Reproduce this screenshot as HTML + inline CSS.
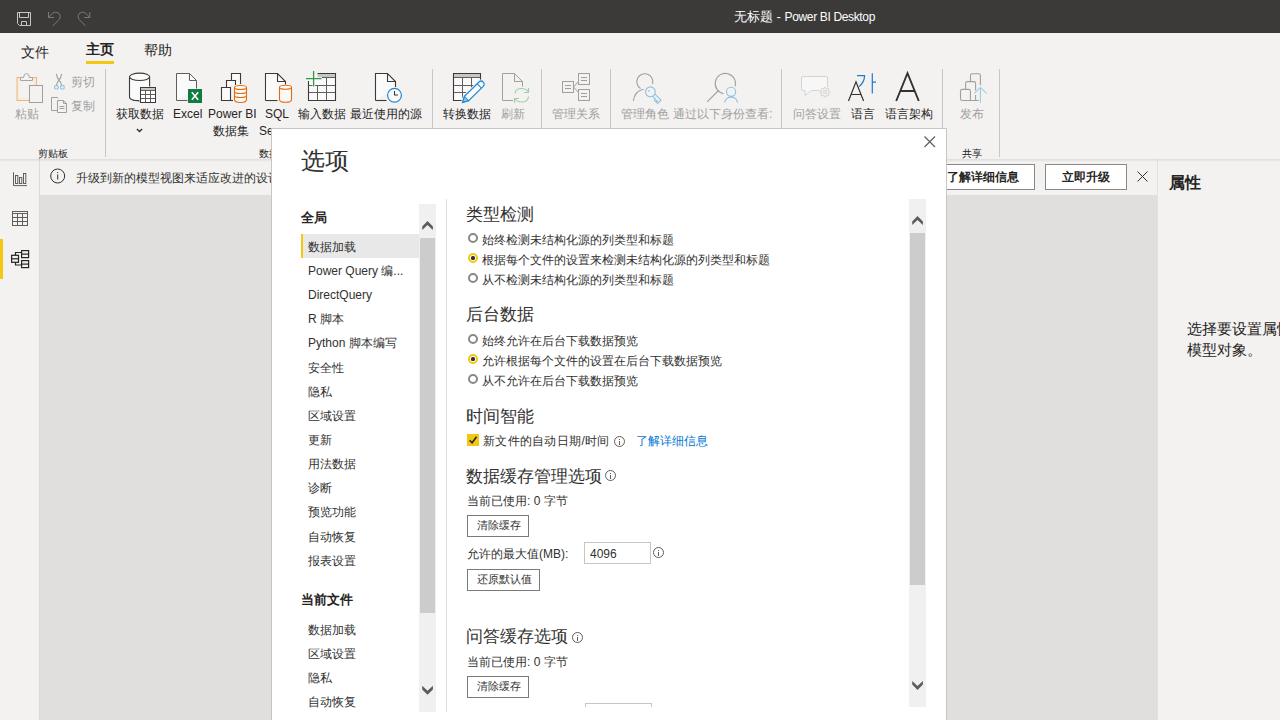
<!DOCTYPE html>
<html><head><meta charset="utf-8">
<style>
*{box-sizing:border-box}
html,body{margin:0;padding:0}
body{width:1280px;height:720px;overflow:hidden;position:relative;background:#e1dfdd;font-family:"Liberation Sans",sans-serif;color:#252423}
.a{position:absolute}
.t{position:absolute;white-space:nowrap;line-height:1}
svg{position:absolute;overflow:visible}
#title{left:0;top:0;width:1280px;height:33px;background:#3b3a39}
#ribbon{left:0;top:33px;width:1280px;height:126px;background:#f3f2f1;box-shadow:0 1px 3px rgba(0,0,0,.18)}
.sep{position:absolute;top:69px;width:1px;height:88px;background:#c8c6c4}
.rl{position:absolute;white-space:nowrap;line-height:1;font-size:12px;color:#252423;top:108px}
.dis{color:#a19f9d}
.gl{position:absolute;white-space:nowrap;line-height:1;font-size:10px;color:#252423;top:149px;font-weight:500}
#nav{left:0;top:159px;width:40px;height:561px;background:#f3f2f1;border-right:1px solid #dcdad8}
#info{left:40px;top:159px;width:1117px;height:36px;background:#f3f2f1}
#props{left:1157px;top:159px;width:123px;height:561px;background:#f3f2f1;border-left:1px solid #e4e2e0}
#shadow{left:0;top:159px;width:1280px;height:3px;background:linear-gradient(rgba(0,0,0,.09),rgba(0,0,0,0))}
#dlg{left:271px;top:128px;width:676px;height:600px}
#frame{left:0;top:0;width:676px;height:600px;background:#fff;border:1px solid #c8c6c4}
.li{position:absolute;left:37px;font-size:12px;line-height:1;color:#323130;white-space:nowrap}
.hd{position:absolute;left:195px;font-size:17px;line-height:1;color:#323130;white-space:nowrap;font-weight:350}
.tx{position:absolute;font-size:12px;line-height:1;color:#323130;white-space:nowrap}
.rad{position:absolute;left:197px;width:10px;height:10px;border-radius:50%;border:2px solid #8a8886;background:#fff}
.rad.on{border:2.3px solid #f2c811}
.rad.on:after{content:"";position:absolute;left:1.4px;top:1.4px;width:3.2px;height:3.2px;border-radius:50%;background:#323130}
.btn{position:absolute;left:196px;height:22px;border:1px solid #7a7a7a;background:#fff;font-size:12px;line-height:1;color:#323130;white-space:nowrap}
.info{position:absolute;width:11px;height:11px;border-radius:50%;border:1px solid #605e5c}
.info:after{content:"";position:absolute;left:4px;top:4px;width:1px;height:4px;background:#605e5c}
.info:before{content:"";position:absolute;left:4px;top:2px;width:1px;height:1px;background:#605e5c}
</style></head>
<body>
<!-- title bar -->
<div id="title" class="a">
  <div class="t" style="left:734px;top:10px;font-size:13px;color:#fff">无标题 - <span style="font-size:12px;letter-spacing:-0.35px">Power BI Desktop</span></div>
</div>
<!-- ribbon -->
<div id="ribbon" class="a"></div>
<svg class="a" style="left:0;top:0" width="1280" height="160" viewBox="0 0 1280 160">
 <g fill="none" stroke-linejoin="miter">
  <!-- title bar: save -->
  <path d="M17.5 12.5H30.5V25.5H19.5L17.5 23.5Z" stroke="#c8c6c4" stroke-width="1"/>
  <path d="M19.5 12.5V17.5H28.5V12.5" stroke="#c8c6c4" stroke-width="1"/>
  <path d="M21.5 25.5V21.5H26.5V25.5" stroke="#c8c6c4" stroke-width="1"/>
  <!-- undo -->
  <path d="M48.5 12V17.5H54" stroke="#7a7877" stroke-width="1"/>
  <path d="M48.5 17.5L52.5 13.2Q55.5 11 58.8 13.2Q61.5 16 59.5 19.2L52.8 25.8" stroke="#7a7877" stroke-width="1"/>
  <!-- redo -->
  <path d="M89.8 12V17.5H84.3" stroke="#7a7877" stroke-width="1"/>
  <path d="M89.8 17.5L85.8 13.2Q82.8 11 79.5 13.2Q76.8 16 78.8 19.2L85.5 25.8" stroke="#7a7877" stroke-width="1"/>

  <!-- paste -->
  <rect x="17" y="77.5" width="19.5" height="23" fill="#f8ecd4" stroke="#efb47e" stroke-width="1"/>
  <rect x="19.3" y="80" width="14.4" height="18.3" fill="#f3f2f1" stroke="none"/>
  <path d="M20.5 80.5V77.5H23.5Q24 73.5 26.5 73.5Q29 73.5 29.5 77.5H32.5V80.5Z" fill="#f3f2f1" stroke="#a8a6a4" stroke-width="1"/>
  <rect x="29.5" y="85.5" width="13" height="17" fill="#f3f2f1" stroke="#a19f9d" stroke-width="1"/>
  <!-- cut -->
  <path d="M56.4 73.8Q57 78 59 80.2Q61 82.4 61.6 85.3M61.6 73.8Q61 78 59 80.2Q57 82.4 56.4 85.3" stroke="#a19f9d" stroke-width="1.1"/>
  <rect x="54.6" y="85.6" width="3.6" height="3.4" rx="1" stroke="#92c3e6" stroke-width="1.1"/>
  <rect x="60.6" y="85.6" width="3.6" height="3.4" rx="1" stroke="#92c3e6" stroke-width="1.1"/>
  <!-- copy -->
  <path d="M57.5 110.5H51.5V97.5H57.5L58.5 98.5" stroke="#a19f9d" stroke-width="1"/>
  <path d="M57.5 100.5H63.5L66.5 103.5V112.5H57.5Z" fill="#f3f2f1" stroke="#a19f9d" stroke-width="1"/>
  <path d="M63.5 100.5V103.5H66.5M59.5 106.5H64.5M59.5 108.5H64.5" stroke="#a19f9d" stroke-width="1"/>

  <!-- get data: cylinder + table -->
  <path d="M129.5 77V97Q129.5 100.5 139.5 100.8" fill="#fafafa" stroke="#3b3a39" stroke-width="1"/>
  <path d="M129.5 77V97Q129.5 100.5 139.5 100.8H149.5V77Z" fill="#fafafa" stroke="none"/>
  <path d="M129.5 77V97Q129.5 100.5 139.5 100.8" stroke="#3b3a39" stroke-width="1.1"/>
  <ellipse cx="139.6" cy="76.8" rx="10.1" ry="3.7" fill="#fafafa" stroke="#3b3a39" stroke-width="1.1"/>
  <path d="M149.6 77V86.5" stroke="#3b3a39" stroke-width="1.1"/>
  <rect x="140.5" y="87.5" width="15" height="15" fill="#fff" stroke="#3b3a39" stroke-width="1"/>
  <rect x="141" y="88" width="14" height="2.5" fill="#c8c6c4"/>
  <path d="M145.5 91V102M150.5 91V102M141 94.5H155M141 98.5H155M141 90.5H155" stroke="#605e5c" stroke-width="1"/>

  <!-- excel -->
  <path d="M176.5 100.5V73.5H189.5L196.5 80.5V88.5" fill="#fafafa" stroke="#605e5c" stroke-width="1"/>
  <path d="M176.5 100.5H187.5" stroke="#605e5c" stroke-width="1"/>
  <path d="M189.5 73.5V80.5H196.5" stroke="#605e5c" stroke-width="1"/>
  <rect x="188" y="89" width="14" height="14" fill="#107c41"/>
  <path d="M191.8 92.2L198.2 99.8M198.2 92.2L191.8 99.8" stroke="#fff" stroke-width="1.6"/>

  <!-- pbi dataset -->
  <path d="M231.5 86V73.5H240.5V84" fill="#fafafa" stroke="#3b3a39" stroke-width="1.1"/>
  <path d="M226.5 87V80.5H235.5V85" fill="#fafafa" stroke="#3b3a39" stroke-width="1.1"/>
  <path d="M221.5 87.5H230.5V100.5H221.5Z" fill="#fafafa" stroke="#3b3a39" stroke-width="1.1"/>
  <path d="M230.5 100.5H233" stroke="#3b3a39" stroke-width="1.1"/>
  <path d="M234.5 87.5V99.5Q234.5 102.5 240.5 102.5Q246.5 102.5 246.5 99.5V87.5" fill="#fafafa" stroke="#e46c0a" stroke-width="1.1"/>
  <ellipse cx="240.5" cy="87.5" rx="6" ry="2" fill="#fafafa" stroke="#e46c0a" stroke-width="1.1"/>
  <path d="M234.5 91.5Q234.5 93.5 240.5 93.5Q246.5 93.5 246.5 91.5M234.5 95.5Q234.5 97.5 240.5 97.5Q246.5 97.5 246.5 95.5" stroke="#e46c0a" stroke-width="1.1"/>

  <!-- sql -->
  <path d="M265.5 100.5V73.5H277.5L285.5 81.5V84.5" fill="#fafafa" stroke="#3b3a39" stroke-width="1.1"/>
  <path d="M265.5 100.5H277.5" stroke="#3b3a39" stroke-width="1.1"/>
  <path d="M277.5 73.5V81.5H285.5" stroke="#3b3a39" stroke-width="1.1"/>
  <rect x="266.1" y="82" width="12.5" height="18" fill="#fafafa"/>
  <path d="M279.5 87.5V99.5Q279.5 102.3 285.5 102.3Q291.5 102.3 291.5 99.5V87.5" fill="#fafafa" stroke="#e46c0a" stroke-width="1.1"/>
  <ellipse cx="285.5" cy="87.3" rx="6" ry="2" fill="#fafafa" stroke="#e46c0a" stroke-width="1.1"/>

  <!-- enter data -->
  <path d="M308.5 81V100.5H335.5V73.5H317.5" fill="#fafafa" stroke="#3b3a39" stroke-width="1.1"/>
  <rect x="317.5" y="74" width="17.5" height="3.3" fill="#c8c6c4"/>
  <path d="M322 77.5H335M317.5 85.5V100.5M326.5 77.5V100.5M309 85.5H312.5M315 85.5H335M309 92.5H335" stroke="#605e5c" stroke-width="1"/>
  <path d="M306 78.6H321.5M313.6 71V86.5" stroke="#2e9a4a" stroke-width="1.3"/>

  <!-- recent sources -->
  <path d="M375.5 100.5V73.5H387.5L395.5 81.5V87" fill="#fafafa" stroke="#3b3a39" stroke-width="1.1"/>
  <path d="M375.5 100.5H386.5" stroke="#3b3a39" stroke-width="1.1"/>
  <path d="M387.5 73.5V81.5H395.5" stroke="#3b3a39" stroke-width="1.1"/>
  <circle cx="394.5" cy="95.2" r="6.9" fill="#fafafa" stroke="#1e88d8" stroke-width="1.2"/>
  <path d="M394.5 91V95H398" stroke="#3b3a39" stroke-width="1.1"/>

  <!-- transform data -->
  <path d="M480.5 88V73.5H453.5V100.5H466" fill="#fafafa" stroke="#3b3a39" stroke-width="1.1"/>
  <rect x="454" y="74" width="26" height="3.3" fill="#c8c6c4"/>
  <path d="M454 77.5H480M462.5 77.5V100.5M471.5 77.5V92M454 85.5H480M454 92.5H475" stroke="#605e5c" stroke-width="1"/>
  <g transform="translate(462.6 102.4) rotate(-44.5)">
   <path d="M0 0L5.5 -3H26A3 3 0 0 1 26 3H5.5Z" fill="#fafafa" stroke="#f3f2f1" stroke-width="3.2"/>
   <path d="M0 0L5.5 -3H26A3 3 0 0 1 26 3H5.5Z" fill="#fafafa" stroke="#1e88d8" stroke-width="1.2"/>
   <path d="M0 0L5.5 -3V3Z" fill="#8dc0ec" stroke="#1e88d8" stroke-width="1"/>
   <path d="M23.5 -3V3" stroke="#1e88d8" stroke-width="1"/>
  </g>

  <!-- refresh -->
  <path d="M502.5 100.5V73.5H514.5L522.5 81.5V86.5" fill="#f3f2f1" stroke="#a19f9d" stroke-width="1"/>
  <path d="M502.5 100.5H513" stroke="#a19f9d" stroke-width="1"/>
  <path d="M514.5 73.5V81.5H522.5" stroke="#a19f9d" stroke-width="1"/>
  <path d="M515 93.5Q515.5 88.5 521.5 88.5Q526 88.5 528.5 92M528.5 88V92.5H524M528.5 96.5Q528 102 521.5 102Q517 102 514.5 98.5M514.5 103V98.5H519" stroke="#9fd0a8" stroke-width="1.2"/>

  <!-- relationships -->
  <g stroke="#a19f9d" stroke-width="1" fill="#f3f2f1">
   <rect x="562.5" y="81.5" width="11" height="11"/>
   <rect x="578.5" y="73.5" width="11" height="11"/>
   <rect x="578.5" y="89.5" width="11" height="11"/>
   <path d="M573.5 87L578.5 81.5M573.5 87L578.5 92.5" fill="none"/>
   <path d="M565 85.5H571M565 88.5H571M581 77.5H587M581 80.5H587M581 93.5H587M581 96.5H587" fill="none"/>
  </g>

  <!-- manage roles -->
  <path d="M640.5 88.5A8 8 0 1 1 652.5 84" stroke="#a19f9d" stroke-width="1.1"/>
  <path d="M633.3 101Q634.5 91 643.5 89.2" stroke="#a19f9d" stroke-width="1.1"/>
  <g transform="translate(650.4 91.8) rotate(45)" stroke="#8ec0e2" stroke-width="1.1" fill="#f3f2f1">
   <path d="M4.6 -1.6H13.4V3.2H11.6V1.6H10.6V3.2H8.8V1.6H4.6"/>
   <circle cx="0" cy="0" r="4.9"/>
  </g>
  <rect x="648.3" y="90.2" width="1.5" height="1.5" fill="#8ec0e2"/>

  <!-- view as -->
  <path d="M735.2 86.4A10.2 10.2 0 1 0 723.45 93.6" stroke="#a19f9d" stroke-width="1.1"/>
  <path d="M726 91Q722 90 718 90.5" stroke="none"/>
  <path d="M718 91L707.2 101.8" stroke="#a19f9d" stroke-width="1.1"/>
  <circle cx="731.1" cy="91.8" r="4.6" fill="#f3f2f1" stroke="#8ec0e2" stroke-width="1.1"/>
  <path d="M724.6 102.6Q725.5 97.2 731.1 97.2Q736.7 97.2 737.6 102.6" stroke="#8ec0e2" stroke-width="1.1"/>

  <!-- Q&A -->
  <path d="M827.5 87V78Q827.5 76.5 826 76.5H803Q801.5 76.5 801.5 78V89Q801.5 90.5 803 90.5H805V95.6L811.5 90.5H819.8" fill="#f7f7f7" stroke="#d6d4d2" stroke-width="1"/>
  <path d="M828.58 91.28L829.86 91.55L829.86 92.85L828.58 93.12L828.18 94.08L828.90 95.17L827.97 96.10L826.88 95.38L825.92 95.78L825.65 97.06L824.35 97.06L824.08 95.78L823.12 95.38L822.03 96.10L821.10 95.17L821.82 94.08L821.42 93.12L820.14 92.85L820.14 91.55L821.42 91.28L821.82 90.32L821.10 89.23L822.03 88.30L823.12 89.02L824.08 88.62L824.35 87.34L825.65 87.34L825.92 88.62L826.88 89.02L827.97 88.30L828.90 89.23L828.18 90.32Z" fill="#f3f2f1" stroke="#d6d4d2" stroke-width="1"/>
  <circle cx="825" cy="92.2" r="1.5" fill="none" stroke="#d6d4d2" stroke-width="1"/>

  <!-- language -->
  <path d="M848.5 101L856 81.8L863.6 101M851 94.5H861" stroke="#323130" stroke-width="1.2"/>
  <path d="M857 75.6H864.6Q864.3 82.5 859 86.6" stroke="#1e7ac8" stroke-width="1.2"/>
  <path d="M872.3 73.2V93.4M872.3 82.2H876" stroke="#1e7ac8" stroke-width="1.2"/>
  <!-- big A -->
  <path d="M896.2 101L907.5 73.2L918.8 101M900.3 91H914.7" stroke="#323130" stroke-width="1.9"/>

  <!-- publish -->
  <g stroke="#a19f9d" stroke-width="1.1" fill="none">
   <path d="M970.5 81.6V75.5Q970.5 73.7 972.3 73.7H978.6Q980.4 73.7 980.4 75.5V85.2"/>
   <path d="M965.6 89V83.5Q965.6 81.6 967.4 81.6H973.8Q975.6 81.6 975.6 83.5V90.5"/>
   <path d="M975.6 95V100.5"/>
   <path d="M962.3 89.4H968.6Q970.4 89.4 970.4 91.2V100.5H978.8M970.4 100.5H962.3Q960.5 100.5 960.5 98.7V91.2Q960.5 89.4 962.3 89.4"/>
  </g>
  <path d="M980.4 87.8V102.7M974.3 93.4L980.4 87.4L986.5 93.4" stroke="#9ccbe8" stroke-width="1.1"/>
 </g>
</svg>

<div class="t" style="left:21px;top:45px;font-size:14px;color:#252423">文件</div>
<div class="t" style="left:86px;top:42px;font-size:14px;color:#252423;font-weight:bold">主页</div>
<div class="a" style="left:86px;top:61px;width:28px;height:3px;background:#f2c811"></div>
<div class="t" style="left:144px;top:43px;font-size:14px;color:#252423">帮助</div>

<div class="sep" style="left:105px"></div>
<div class="sep" style="left:432px"></div>
<div class="sep" style="left:541px"></div>
<div class="sep" style="left:610px"></div>
<div class="sep" style="left:781px"></div>
<div class="sep" style="left:942px"></div>
<div class="sep" style="left:999px"></div>

<div class="rl dis" style="left:15px">粘贴</div>
<div class="rl dis" style="left:71px;top:76px">剪切</div>
<div class="rl dis" style="left:71px;top:100px">复制</div>
<div class="rl" style="left:116px">获取数据</div>
<svg style="left:136px;top:128px" width="8" height="5" viewBox="0 0 8 5"><path d="M0.9 0.9L3.5 3.5L6.1 0.9" fill="none" stroke="#323130" stroke-width="1.4"/></svg>
<div class="rl" style="left:173px">Excel</div>
<div class="rl" style="left:208px">Power BI</div>
<div class="rl" style="left:213px;top:125px">数据集</div>
<div class="rl" style="left:265px">SQL</div>
<div class="rl" style="left:259px;top:125px">Se</div>
<div class="rl" style="left:298px">输入数据</div>
<div class="rl" style="left:350px">最近使用的源</div>
<div class="rl" style="left:443px">转换数据</div>
<div class="rl dis" style="left:501px">刷新</div>
<div class="rl dis" style="left:552px">管理关系</div>
<div class="rl dis" style="left:621px">管理角色</div>
<div class="rl dis" style="left:673px">通过以下身份查看:</div>
<div class="rl dis" style="left:793px">问答设置</div>
<div class="rl" style="left:851px">语言</div>
<div class="rl" style="left:885px">语言架构</div>
<div class="rl dis" style="left:960px">发布</div>
<div class="gl" style="left:38px">剪贴板</div>
<div class="gl" style="left:259px">数据</div>
<div class="gl" style="left:962px">共享</div>

<!-- left nav -->
<div id="nav" class="a"></div>
<div class="a" style="left:0;top:239px;width:3px;height:40px;background:#f2c811"></div>
<svg class="a" style="left:0;top:159px" width="80" height="130" viewBox="0 159 80 130">
 <g fill="none">
  <!-- report -->
  <path d="M13.5 172.3V185.6H27" stroke="#605e5c" stroke-width="1"/>
  <rect x="15.5" y="175.5" width="2.3" height="8" stroke="#605e5c" stroke-width="1"/>
  <rect x="19.5" y="177.5" width="2.3" height="6" stroke="#605e5c" stroke-width="1"/>
  <rect x="23.5" y="173.5" width="2.3" height="10" stroke="#605e5c" stroke-width="1"/>
  <!-- data -->
  <rect x="12.5" y="211.5" width="15" height="14" stroke="#605e5c" stroke-width="1"/>
  <path d="M12.5 213.5H27.5M12.5 217.5H27.5M12.5 221.5H27.5M17.5 213.5V225.5M22.5 213.5V225.5" stroke="#605e5c" stroke-width="1"/>
  <!-- model -->
  <g stroke="#252423" stroke-width="1.2">
   <rect x="11.6" y="255.3" width="6.9" height="7"/>
   <path d="M11.6 258.8H18.5"/>
   <rect x="21.6" y="250.6" width="7" height="7"/>
   <path d="M21.6 254.1H28.6"/>
   <rect x="21.6" y="260.6" width="7" height="7"/>
   <path d="M21.6 264.1H28.6"/>
   <path d="M15.5 255.3V252.5H21.6M15.5 262.3V265H21.6"/>
  </g>
 </g>
</svg>


<!-- info bar -->
<div id="info" class="a"></div>
<svg style="left:50px;top:168px" width="16" height="16" viewBox="0 0 16 16"><circle cx="7.7" cy="8" r="7" fill="none" stroke="#323130" stroke-width="1"/><path d="M7.7 6.5V11.5" stroke="#323130" stroke-width="1"/><circle cx="7.7" cy="4.6" r="0.6" fill="#323130"/></svg>
<div class="t" style="left:76px;top:172px;font-size:12px;color:#323130">升级到新的模型视图来适应改进的设计和更好的性能。</div>
<div class="a" style="left:945px;top:164px;width:90px;height:26px;border:1px solid #8a8886;background:#fff"></div>
<div class="t" style="left:947px;top:171px;font-size:12px;font-weight:bold;color:#252423">了解详细信息</div>
<div class="a" style="left:1045px;top:164px;width:82px;height:26px;border:1px solid #8a8886;background:#fff"></div>
<div class="t" style="left:1062px;top:171px;font-size:12px;font-weight:bold;color:#252423">立即升级</div>

<!-- properties -->
<div id="props" class="a"></div>
<div id="shadow" class="a"></div>
<svg style="left:1137px;top:171px" width="11" height="11" viewBox="0 0 11 11"><path d="M0.5 0.5L10.5 10.5M10.5 0.5L0.5 10.5" fill="none" stroke="#323130" stroke-width="1"/></svg>
<div class="t" style="left:1169px;top:175px;font-size:16px;font-weight:600;color:#252423">属性</div>
<div class="t" style="left:1187px;top:318px;font-size:15px;color:#252423;line-height:21px;white-space:normal;width:200px">选择要设置属性的<br>模型对象。</div>

<!-- dialog -->
<div id="dlg" class="a">
  <div id="frame" class="a"></div>
  <div class="t" style="left:30px;top:21px;font-size:24px;color:#323130;font-weight:300">选项</div>
  <div class="t" style="left:30px;top:83px;font-size:13px;font-weight:bold;color:#252423">全局</div>
  <div class="a" style="left:30px;top:106px;width:118px;height:24px;background:#e8e8e8;border-left:2px solid #f2c811"></div>
  <div class="li" style="top:113px">数据加载</div>
  <div class="li" style="top:137px">Power Query 编...</div>
  <div class="li" style="top:161px">DirectQuery</div>
  <div class="li" style="top:185px">R 脚本</div>
  <div class="li" style="top:209px">Python 脚本编写</div>
  <div class="li" style="top:234px">安全性</div>
  <div class="li" style="top:258px">隐私</div>
  <div class="li" style="top:282px">区域设置</div>
  <div class="li" style="top:306px">更新</div>
  <div class="li" style="top:330px">用法数据</div>
  <div class="li" style="top:354px">诊断</div>
  <div class="li" style="top:378px">预览功能</div>
  <div class="li" style="top:403px">自动恢复</div>
  <div class="li" style="top:427px">报表设置</div>
  <div class="t" style="left:30px;top:465px;font-size:13px;font-weight:bold;color:#252423">当前文件</div>
  <div class="li" style="top:496px">数据加载</div>
  <div class="li" style="top:520px">区域设置</div>
  <div class="li" style="top:544px">隐私</div>
  <div class="li" style="top:568px">自动恢复</div>
  <!-- left scrollbar -->
  <div class="a" style="left:148px;top:76px;width:17px;height:508px;background:#f0f0f0"></div>
  <div class="a" style="left:149px;top:110px;width:15px;height:375px;background:#cccccc"></div>
  <!-- divider -->
  <div class="a" style="left:175px;top:71px;width:1px;height:513px;background:#e1dfdd"></div>
  <!-- close -->
  <svg style="left:653px;top:8px" width="12" height="12" viewBox="0 0 12 12"><path d="M0.5 0.5L11 11M11 0.5L0.5 11" stroke="#605e5c" stroke-width="1.2"/></svg>

  <!-- content -->
  <div class="hd" style="top:78px">类型检测</div>
  <div class="rad" style="top:105px"></div>
  <div class="tx" style="left:211px;top:106px">始终检测未结构化源的列类型和标题</div>
  <div class="rad on" style="top:125px"></div>
  <div class="tx" style="left:211px;top:126px">根据每个文件的设置来检测未结构化源的列类型和标题</div>
  <div class="rad" style="top:145px"></div>
  <div class="tx" style="left:211px;top:146px">从不检测未结构化源的列类型和标题</div>

  <div class="hd" style="top:178px">后台数据</div>
  <div class="rad" style="top:206px"></div>
  <div class="tx" style="left:211px;top:207px">始终允许在后台下载数据预览</div>
  <div class="rad on" style="top:226px"></div>
  <div class="tx" style="left:211px;top:227px">允许根据每个文件的设置在后台下载数据预览</div>
  <div class="rad" style="top:246px"></div>
  <div class="tx" style="left:211px;top:247px">从不允许在后台下载数据预览</div>

  <div class="hd" style="top:280px">时间智能</div>
  <div class="a" style="left:196px;top:306px;width:12px;height:12px;background:#f2c811"></div>
  <svg style="left:196px;top:306px" width="12" height="12" viewBox="0 0 12 12"><path d="M2.6 6.2L5.1 8.7L9.6 2.8" fill="none" stroke="#252423" stroke-width="1.6"/></svg>
  <div class="tx" style="left:212px;top:307px;letter-spacing:0.3px">新文件的自动日期/时间</div>
  <div class="info" style="left:343px;top:308px"></div>
  <div class="tx" style="left:365px;top:307px;color:#0078d4">了解详细信息</div>

  <div class="hd" style="top:340px">数据缓存管理选项</div>
  <div class="info" style="left:334px;top:342px"></div>
  <div class="tx" style="left:196px;top:367px">当前已使用: 0 字节</div>
  <div class="btn" style="top:387px;width:62px"></div>
  <div class="tx" style="left:206px;top:392px;font-size:11px">清除缓存</div>
  <div class="tx" style="left:196px;top:420px">允许的最大值(MB):</div>
  <div class="a" style="left:313px;top:414px;width:67px;height:22px;border:1px solid #c8c6c4"></div>
  <div class="tx" style="left:319px;top:420px">4096</div>
  <div class="info" style="left:382px;top:419px"></div>
  <div class="btn" style="top:441px;width:73px"></div>
  <div class="tx" style="left:206px;top:446px;font-size:11px">还原默认值</div>

  <div class="hd" style="top:500px">问答缓存选项</div>
  <div class="info" style="left:301px;top:504px"></div>
  <div class="tx" style="left:196px;top:528px">当前已使用: 0 字节</div>
  <div class="btn" style="top:548px;width:62px"></div>
  <div class="tx" style="left:206px;top:553px;font-size:11px">清除缓存</div>
  <div class="a" style="left:314px;top:575px;width:67px;height:4px;border:1px solid #c8c6c4;border-bottom:none"></div>

  <!-- right scrollbar -->
  <div class="a" style="left:638px;top:71px;width:17px;height:508px;background:#f0f0f0"></div>
  <div class="a" style="left:639px;top:105px;width:15px;height:352px;background:#cccccc"></div>
  <svg style="left:0;top:0" width="676" height="600" viewBox="271 128 676 600"><g fill="#5c5c5c" stroke="none">
   <path d="M422.2 230L427.5 225L432.9 230V226.4L427.5 221.1L422.2 226.4Z"/>
   <path d="M422.2 685.8L427.5 690.8L432.9 685.8V689.4L427.5 694.7L422.2 689.4Z"/>
   <path d="M912.2 225L917.5 220L922.9 225V221.4L917.5 216.1L912.2 221.4Z"/>
   <path d="M912.2 681L917.5 686L922.9 681V684.6L917.5 689.9L912.2 684.6Z"/>
  </g></svg>
</div>
</body></html>
